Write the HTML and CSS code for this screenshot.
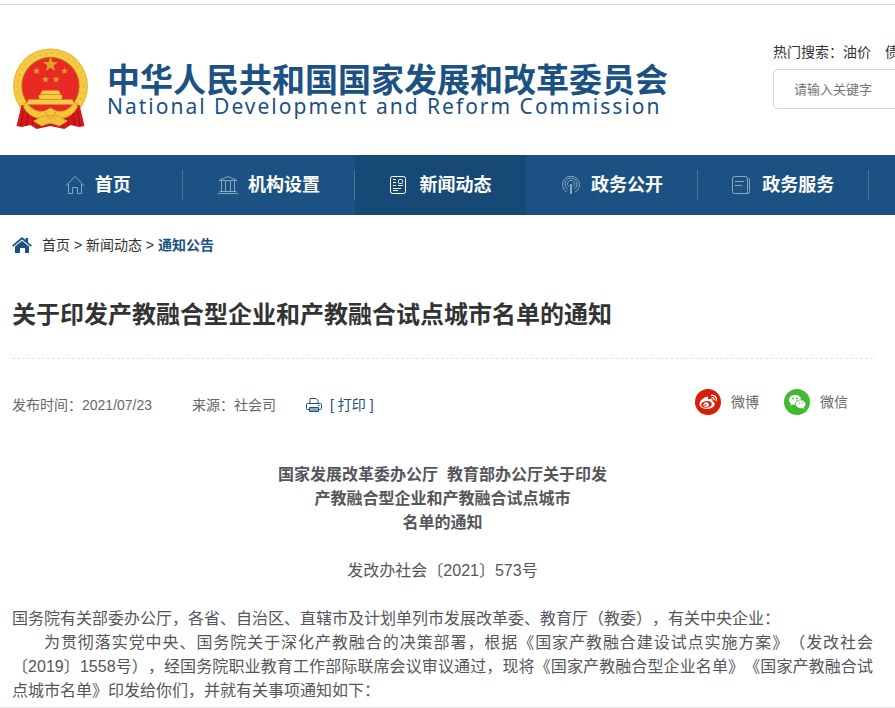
FILE: index.html
```html
<!DOCTYPE html>
<html lang="zh-CN">
<head>
  <meta charset="utf-8">
  <title>关于印发产教融合型企业和产教融合试点城市名单的通知</title>
  <link rel="stylesheet" href="styles.css">
</head>
<body>
  <header class="header">
    <div class="logo">
      <svg class="emblem" viewBox="0 0 76 82" aria-hidden="true">
        <defs>
          <radialGradient id="gold" cx="50%" cy="50%" r="50%">
            <stop offset="74%" stop-color="#e6b02c"/>
            <stop offset="80%" stop-color="#f6cb42"/>
            <stop offset="94%" stop-color="#f5cb45"/>
            <stop offset="100%" stop-color="#e3b338"/>
          </radialGradient>
          <path id="star" d="M0-10 2.4-3.1 9.5-3.1 3.8 1.2 5.9 8.1 0 4-5.9 8.1-3.8 1.2-9.5-3.1-2.4-3.1z"/>
        </defs>
        <path d="M10 53 9 79l9-2 6 4 14-3 14 3 6-4 9 2-1-26z" fill="#c9161a"/>
        <circle cx="38" cy="38" r="37.500" fill="url(#gold)"/>
        <circle cx="38" cy="38" r="33" fill="none" stroke="#e9b937" stroke-width="2" stroke-dasharray="2 4"/>
        <circle cx="38" cy="38" r="28.500" fill="#e92a24" stroke="#b5651c"/>
        <g fill="#dfa32a">
          <use href="#star" transform="translate(38 16.500) scale(.8)"/>
          <use href="#star" transform="translate(24 23) scale(.38)"/>
          <use href="#star" transform="translate(52 23) scale(.38)"/>
          <use href="#star" transform="translate(33 31.500) scale(.38)"/>
          <use href="#star" transform="translate(43.500 31.500) scale(.38)"/>
        </g>
        <path d="M30 42.500h16l2 3-1 1 3 1-1 4h11l2 5H14l2-5h11l-1-4 3-1-1-1z" fill="#f7cb45"/>
        <path d="M28 46.500h20M27 51.500h22" stroke="#d6951e" fill="none"/>
        <path d="M9 57c5 0 7 3 9 5l10 7-4 11-7-4-8 3-5-1z" fill="#d8191c"/>
        <path d="M67 57c-5 0-7 3-9 5l-10 7 4 11 7-4 8 3 5-1z" fill="#d8191c"/>
        <path d="M11 64 8 78M16 64l-2 13M22 68l-2 9M65 64l3 14M60 64l2 13M54 68l2 9" stroke="#9d0f14" fill="none"/>
        <path d="M13 54c6 9 13 10 19 9l6-3 6 3c6 1 13 0 19-9l2 5c-5 9-12 12-19 11l-3 5-5-2-5 2-3-5c-7 1-14-2-19-11z" fill="#f5c63c" stroke="#cf9722" stroke-width=".7"/>
        <path d="M21 73c5-2 8-6 12-5l5 3 5-3c4-1 7 3 12 5l-8 5-9-3-9 3z" fill="#f3c139" stroke="#cf9722" stroke-width=".7"/>
        <path d="M33 64a5 4 0 0 0 10 0" fill="none" stroke="#cf9722"/>
      </svg>
      <div class="logo-text">
        <div class="logo-cn">中华人民共和国国家发展和改革委员会</div>
        <div class="logo-en">National Development and Reform Commission</div>
      </div>
    </div>
    <form class="search">
      <label class="hot" for="keyword">热门搜索：<a href="#">油价</a><a href="#">债</a></label>
      <input class="search-input" id="keyword" type="text" placeholder="请输入关键字">
    </form>
  </header>

  <nav class="nav">
    <a class="nav-item" href="#">
      <svg class="nav-icon" viewBox="0 0 20 20"><path d="M.5 11 10 1.500l9.500 9.500M3.500 9v9.500h4v-6h5v6h4V9"/></svg>
      首页
    </a>
    <a class="nav-item" href="#">
      <svg class="nav-icon" viewBox="0 0 20 20"><path d="M1 5.500 10 1.500l9 4zM3.500 6v11M7.500 6v11M12.500 6v11M16.500 6v11M1.500 16.500h17M0 18.500h20"/></svg>
      机构设置
    </a>
    <a class="nav-item active" href="#">
      <svg class="nav-icon" viewBox="0 0 20 20"><rect x=".5" y="1.500" width="15" height="17" rx="2"/><path d="M3 4.500h3M3 7.500h3M3 10.500h3M3 13.500h8M3 15.500h5M8 10.500h5"/><rect x="8.500" y="4.500" width="4" height="4" rx="1"/></svg>
      新闻动态
    </a>
    <a class="nav-item" href="#">
      <svg class="nav-icon" viewBox="0 0 20 20"><path d="M6 17.200a8.500 8.500 0 1 1 8 0M6.800 14.200a6 6 0 1 1 6.400 0M8 11.800a3.500 3.500 0 1 1 4 0M9.500 9v10M10.500 9v10"/></svg>
      政务公开
    </a>
    <a class="nav-item" href="#">
      <svg class="nav-icon" viewBox="0 0 20 20"><rect x=".5" y="1.500" width="15" height="17" rx="2"/><path d="M3 6.500h9M3 10.500h7M16 3.500h.500a1 1 0 0 1 1 1v12a2 2 0 0 1-2 2h-3"/></svg>
      政务服务
    </a>
  </nav>

  <main class="main">
    <div class="crumbs">
      <svg class="crumb-icon" viewBox="0 0 20 16" aria-hidden="true"><path d="M10 0 13.500 3V1H16v4.200L20 8.600 18.800 9.800 10 2.400 1.200 9.800 0 8.600z"/><path d="M10 3.700 17 9.500V16h-4v-5H8v5H3V9.500z"/></svg>
      <div><a href="#">首页</a> &gt; <a href="#">新闻动态</a> &gt; <a class="current" href="#">通知公告</a></div>
    </div>

    <h1 class="title">关于印发产教融合型企业和产教融合试点城市名单的通知</h1>

    <div class="meta">
      <span class="date">发布时间：2021/07/23</span>
      <span class="source">来源：社会司</span>
      <button class="print" type="button">
        <svg class="print-icon" viewBox="0 0 16 16"><path d="M4 6V1.500h6L12 3.500V6M3.500 12.500h-2a1 1 0 0 1-1-1V7.500a1 1 0 0 1 1-1h13a1 1 0 0 1 1 1v4a1 1 0 0 1-1 1h-2"/><path d="M3.500 10.500h9v4h-9z" fill="#8aa9c4"/><path d="M12 8.500h1.500"/></svg>
        [ 打印 ]
      </button>
      <div class="share">
        <a href="#">
          <svg class="share-icon" viewBox="0 0 26 26"><circle cx="13" cy="13" r="13" fill="#d81e06"/><path transform="translate(4.500 4) scale(.73)" fill="#fff" d="M10.098 20.323c-3.977.391-7.414-1.406-7.672-4.020-.259-2.609 2.759-5.047 6.740-5.441 3.979-.394 7.413 1.404 7.671 4.018.259 2.600-2.759 5.049-6.737 5.439zM9.050 17.219c-.384.616-1.208.884-1.829.602-.612-.279-.793-.991-.406-1.593.379-.595 1.176-.861 1.793-.601.622.263.820.972.442 1.592zm1.270-1.627c-.141.237-.449.353-.689.253-.236-.090-.313-.361-.177-.586.138-.227.436-.346.672-.240.239.090.315.360.180.601zm.176-2.719c-1.893-.493-4.033.450-4.857 2.118-.836 1.704-.026 3.591 1.886 4.210 1.983.640 4.318-.341 5.132-2.179.800-1.793-.201-3.642-2.161-4.149zm7.563-1.224c-.346-.105-.570-.180-.405-.615.375-.977.420-1.804 0-2.404-.781-1.112-2.915-1.053-5.364-.030 0 0-.766.331-.571-.271.376-1.217.315-2.224-.270-2.809-1.338-1.337-4.869.045-7.888 3.080C1.309 10.870 0 13.273 0 15.348c0 3.981 5.099 6.395 10.086 6.395 6.536 0 10.888-3.801 10.888-6.820 0-1.822-1.547-2.854-2.915-3.284zm1.908-5.092c-.766-.856-1.908-1.187-2.960-.962-.436.090-.706.511-.616.932.090.420.511.691.932.602.511-.105 1.067.044 1.442.465.376.421.466.977.316 1.473-.136.406.089.856.510.992.405.119.857-.105.992-.512.330-1.021.120-2.178-.646-3.035zm2.418-2.195c-1.576-1.757-3.905-2.419-6.054-1.968-.496.104-.812.587-.706 1.081.104.496.586.813 1.082.707 1.532-.331 3.185.150 4.296 1.383 1.112 1.246 1.429 2.943.947 4.416-.165.480.106 1.007.586 1.157.479.165.991-.104 1.157-.586.675-2.088.241-4.478-1.338-6.235z"/></svg>
          微博
        </a>
        <a href="#">
          <svg class="share-icon" viewBox="0 0 26 26"><circle cx="13" cy="13" r="13" fill="#42b933"/><path d="M11 6c3.400 0 6 2 6.200 4.600-3.600-.1-6.200 2.200-6 5.200-1 .1-1.900 0-2.700-.3L6.300 16.700 7 14.600C5.700 13.700 4.900 12.400 4.900 11 4.900 8.200 7.600 6 11 6z" fill="#fff"/><path d="M16.700 11.300c2.700 0 4.800 1.800 4.800 4 0 1.200-.7 2.200-1.700 2.900l.5 1.700-1.900-1c-.5.200-1.100.3-1.700.3-2.700 0-4.800-1.800-4.800-3.900 0-2.200 2.100-4 4.800-4z" fill="#fff"/><g fill="#42b933"><circle cx="9" cy="9.500" r=".9"/><circle cx="13" cy="9.500" r=".9"/><circle cx="15.200" cy="14" r=".7"/><circle cx="18.300" cy="14" r=".7"/></g></svg>
          微信
        </a>
      </div>
    </div>

    <article class="article">
      <h2>国家发展改革委办公厅&nbsp; 教育部办公厅关于印发<br>产教融合型企业和产教融合试点城市<br>名单的通知</h2>
      <p class="number">发改办社会〔2021〕573号</p>
      <p>国务院有关部委办公厅，各省、自治区、直辖市及计划单列市发展改革委、教育厅（教委），有关中央企业：</p>
      <p class="indent">为贯彻落实党中央、国务院关于深化产教融合的决策部署，根据《国家产教融合建设试点实施方案》（发改社会〔2019〕1558号），经国务院职业教育工作部际联席会议审议通过，现将《国家产教融合型企业名单》《国家产教融合试点城市名单》印发给你们，并就有关事项通知如下：</p>
    </article>
  </main>
</body>
</html>
```

FILE: styles.css
```css
* {
  box-sizing: border-box;
}

body {
  margin: 0;
  padding-top: 4px;
  min-height: 100vh;
  overflow-x: hidden;
  border-bottom: 1px solid #e2e2e2;
  background: #fff;
  color: #333;
  font-family: "Liberation Sans", "Noto Sans CJK SC", sans-serif;
  font-size: 14px;
  line-height: 20px;
  text-spacing-trim: space-all;
}

a {
  color: inherit;
  text-decoration: none;
}

svg {
  flex: none;
}

/* header */
.header {
  display: flex;
  justify-content: space-between;
  height: 151px;
  padding-left: 12px;
  border-top: 1px solid #cfdce8;
  overflow: hidden;
}

.logo {
  display: flex;
  gap: 18px;
  padding-top: 43px;
  color: #1b5183;
  white-space: nowrap;
}

.emblem {
  width: 77px;
  height: 82px;
}

.logo-text {
  padding-top: 16px;
}

.logo-cn {
  font-size: 33px;
  font-weight: bold;
  line-height: 33px;
}

.logo-en {
  font-family: "Noto Sans", sans-serif;
  font-size: 21px;
  line-height: 18px;
  letter-spacing: 2px;
}

.search {
  flex: 0 0 130px;
  margin-right: -8px;
  padding-top: 37px;
}

.hot {
  display: flex;
  white-space: nowrap;
}

.hot a + a {
  margin-left: 14px;
}

.search-input {
  width: 100%;
  height: 40px;
  margin-top: 7px;
  padding: 0 20px;
  border: 1px solid #d8d8d8;
  border-radius: 4px;
  font-family: inherit;
  font-size: 13px;
}

.search-input::placeholder {
  color: #757575;
}

/* navigation */
.nav {
  display: flex;
  height: 60px;
  padding: 0 26px 0 12px;
  background: #1b5183;
}

.nav-item {
  position: relative;
  display: flex;
  flex: 1;
  align-items: center;
  justify-content: center;
  gap: 10px;
  color: #fff;
  font-size: 18px;
  font-weight: bold;
}

.nav-item::after {
  content: "";
  position: absolute;
  top: 15px;
  right: 0;
  width: 1px;
  height: 30px;
  background: #49749c;
}

.nav-item.active {
  background: #164976;
}

.nav-item.active::after {
  display: none;
}

.nav-icon {
  width: 20px;
  height: 20px;
  fill: none;
  stroke: #8ba8c1;
}

.active .nav-icon {
  stroke: #fff;
}

/* page */
.main {
  padding: 20px 22px 0 12px;
}

.crumbs {
  display: flex;
  align-items: center;
  gap: 10px;
}

.crumb-icon {
  width: 20px;
  height: 16px;
  fill: #1b5183;
}

.current {
  color: #1b5183;
  font-weight: bold;
}

.title {
  margin: 0;
  padding: 43px 0 27px;
  border-bottom: 1px dashed #e2e2e2;
  font-size: 24px;
  line-height: 33px;
}

.meta {
  display: flex;
  align-items: flex-end;
  padding: 30px 25px 48px 0;
  color: #666;
}

.source {
  margin-left: 40px;
}

.print {
  display: flex;
  align-items: center;
  gap: 8px;
  margin-left: 30px;
  padding: 0;
  border: 0;
  background: none;
  color: #1b5183;
  font: inherit;
  cursor: pointer;
}

.print-icon {
  width: 16px;
  height: 16px;
  fill: none;
  stroke: #1b5183;
}

.share {
  display: flex;
  gap: 25px;
  margin-left: auto;
}

.share a {
  display: flex;
  align-items: center;
  gap: 10px;
}

.share-icon {
  width: 26px;
  height: 26px;
}

/* notice text */
.article {
  color: #55565c;
  font-size: 16px;
  line-height: 24px;
  text-align: justify;
}

.article h2 {
  margin: 0;
  font-size: 16px;
  text-align: center;
}

.article p {
  margin: 0;
}

.article .number {
  margin: 24px 0;
  text-align: center;
}

.indent {
  text-indent: 2em;
}
```
